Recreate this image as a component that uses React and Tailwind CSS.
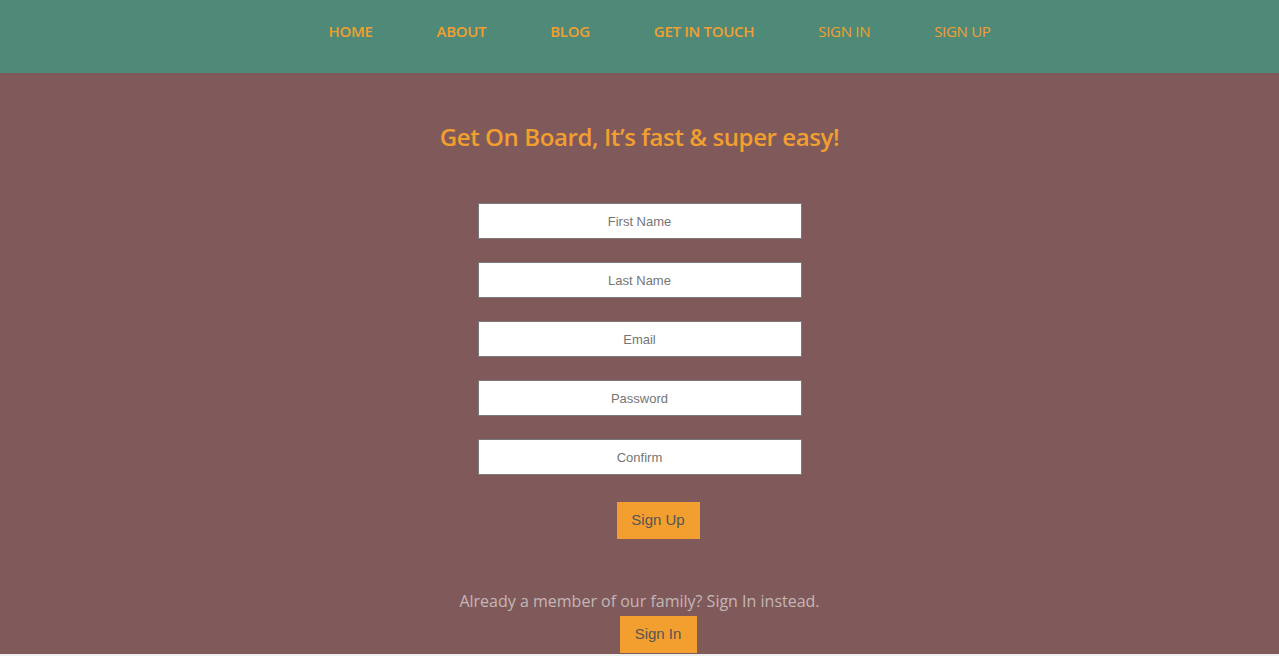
import React from 'react';

const NAV = [
  { label: 'HOME', bold: true },
  { label: 'ABOUT', bold: true },
  { label: 'BLOG', bold: true },
  { label: 'GET IN TOUCH', bold: true },
  { label: 'SIGN IN', bold: false },
  { label: 'SIGN UP', bold: false },
];

const FIELDS = ['First Name', 'Last Name', 'Email', 'Password', 'Confirm'];

export default function App() {
  return (
    <div className="min-h-screen bg-[#efefef] font-['Open_Sans',sans-serif]">
      {/* header */}
      <header className="h-[73px] bg-[#4f8a78] flex items-center justify-center">
        <ul className="flex gap-[64px] pl-[40px] -mt-[10px]">
          {NAV.map(n => (
            <li key={n.label}
              className={`text-[15px] tracking-[-0.3px] text-[#f29f2f] ${n.bold ? 'font-semibold' : 'font-normal'}`}>
              {n.label}
            </li>
          ))}
        </ul>
      </header>

      {/* form section */}
      <main className="h-[581px] bg-[#805a5a] flex flex-col items-center">
        <h1 className="mt-[46px] text-[24px] font-semibold tracking-[-0.4px] text-[#f29f2f] leading-[36px]">
          Get On Board, It’s fast &amp; super easy!
        </h1>

        <form className="mt-[48px] flex flex-col items-center gap-[23px]" onSubmit={e => e.preventDefault()}>
          {FIELDS.map(f => (
            <input key={f} type={f === 'Password' || f === 'Confirm' ? 'password' : 'text'} placeholder={f}
              className="w-[324px] h-[36px] bg-white border border-[#7a7a7a] text-center text-[13px] font-['Liberation_Sans',sans-serif] placeholder:text-[#757575] outline-none" />
          ))}
          <button type="submit"
            className="mt-[4px] ml-[37px] w-[83px] h-[37px] bg-[#f29f2f] text-[#555] text-[15px] font-['Liberation_Sans',sans-serif]">
            Sign Up
          </button>
        </form>

        <p className="mt-[51px] text-[16px] leading-[22px] text-[#c4b6b6]">
          Already a member of our family? Sign In instead.
        </p>
        <button className="mt-[4px] ml-[37px] w-[77px] h-[37px] bg-[#f29f2f] text-[#555] text-[15px] font-['Liberation_Sans',sans-serif]">
          Sign In
        </button>
      </main>
    </div>
  );
}
